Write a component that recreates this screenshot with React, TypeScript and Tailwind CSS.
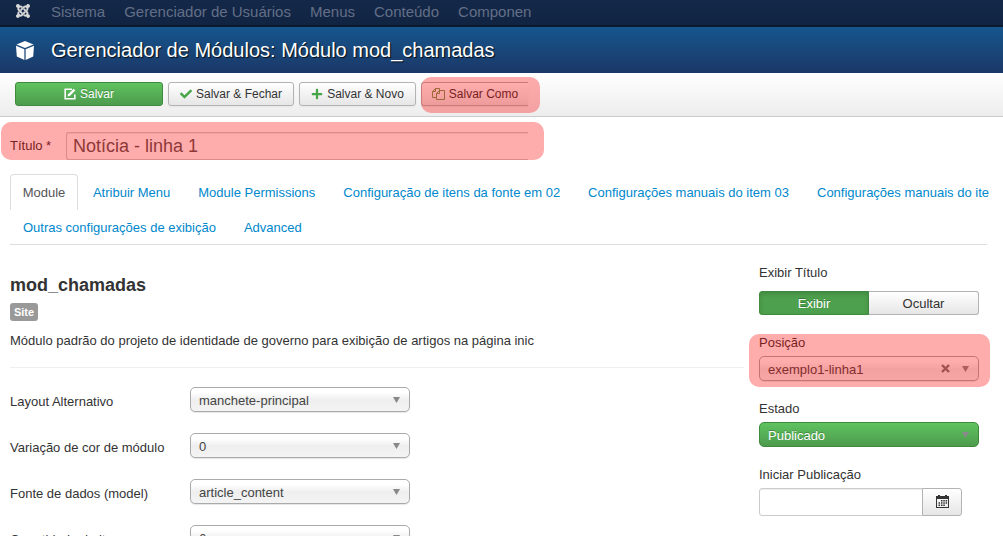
import type { ReactNode } from "react";
import { FaCheck, FaPlus, FaJoomla } from "react-icons/fa";

const btn =
  "flex h-6 items-center justify-center gap-1 rounded-[3px] border border-[#b3b3b3] bg-linear-to-b from-white to-[#e6e6e6] text-xs text-[#333] shadow-[inset_0_1px_0_rgba(255,255,255,0.2),0_1px_2px_rgba(0,0,0,0.05)]";

function EditIcon() {
  return (
    <svg viewBox="0 0 12 12" className="size-3" fill="none" stroke="currentColor">
      <path d="M8 1.2H1.2v9.600h9.600V6.500" strokeWidth="1.600" />
      <path d="M3.600 8.600l.5-2.300L9.600.8l1.700 1.700-5.500 5.500z" fill="currentColor" stroke="none" />
    </svg>
  );
}

function CopyIcon() {
  return (
    <svg viewBox="0 0 13 13" className="size-[13px]" fill="none" stroke="#6f9a55">
      <path d="M4.500 9.500h-4v-6l3-3h4v2" />
      <path d="M3.500 .5v3h-3" />
      <path d="M4.500 5.500l3-3h5v9h-8z" />
      <path d="M7.500 2.500v3h-3" />
    </svg>
  );
}

function CubeIcon() {
  return (
    <svg viewBox="0 0 18 19" className="h-[19px] w-[18px]" fill="#fff">
      <path d="M9 0l8.500 3.400L9 7 .5 3.400z" />
      <path d="M0 4.700l8.400 3.600V19L.8 15.400z" />
      <path d="M18 4.700L9.600 8.300V19l7.600-3.600z" />
    </svg>
  );
}

function CalendarIcon() {
  return (
    <svg viewBox="0 0 13 13" className="size-[13px]" fill="#333">
      <path d="M0 1h2V0h2v1h5V0h2v1h2v12H0zM1 4v8h11V4z" fillRule="evenodd" />
      <path d="M5 5h1.500v1.500H5zM7.300 5h1.500v1.500H7.300zM9.600 5h1.500v1.500H9.600zM2.500 7.300H4v1.500H2.500zM5 7.300h1.500v1.500H5zM7.300 7.300h1.500v1.500H7.300zM9.600 7.300h1.500v1.500H9.600zM2.500 9.600H4v1.500H2.500zM5 9.600h1.500v1.500H5zM7.300 9.600h1.500v1.500H7.300z" />
    </svg>
  );
}

function Caret({ className }: { className: string }) {
  return (
    <svg viewBox="0 0 7 6" className={`pointer-events-none absolute top-2.5 right-2.5 h-1.5 w-[7px] ${className}`} fill="currentColor">
      <path d="M0 0h7L3.500 6z" />
    </svg>
  );
}

function Chosen({ id, value, green = false, children }: { id: string; value: string; green?: boolean; children?: ReactNode }) {
  return (
    <div className="relative h-[25px] w-[220px]">
      <select
        id={id}
        className={`block size-full appearance-none rounded-[5px] border pt-0.5 pl-2 text-[13px] outline-none ${
          green
            ? "border-[#3c8a3c] bg-linear-to-b from-[#5fc35f] to-[#4d9b4d] text-white [text-shadow:0_-1px_0_rgba(0,0,0,0.25)]"
            : "border-[#aaa] bg-linear-to-b from-white from-20% via-[#eee] via-52% to-[#f4f4f4] text-[#444] shadow-[0_1px_1px_rgba(0,0,0,0.1)]"
        }`}
      >
        <option>{value}</option>
      </select>
      {children}
      <Caret className={green ? "text-[#8a8a8a]" : "text-[#888]"} />
    </div>
  );
}

const fields = [
  ["Layout Alternativo", "manchete-principal"],
  ["Variação de cor de módulo", "0"],
  ["Fonte de dados (model)", "article_content"],
  ["Quantidade de itens", "6"],
];

const tabs = [
  "Atribuir Menu",
  "Module Permissions",
  "Configuração de itens da fonte em 02",
  "Configurações manuais do item 03",
];

const highlight = "pointer-events-none absolute rounded-[10px] bg-[#ff0000]/[0.325]";

export default function App() {
  return (
    <div className="h-screen overflow-hidden bg-white font-['Liberation_Sans',Arial,sans-serif] text-[13px] leading-[18px] text-[#333]">
      <nav className="flex h-[27px] items-start border-b-2 border-[#0c1a30] bg-linear-to-b from-[#142849] to-[#112442] pl-[15px]">
        <a href="#" aria-label="Joomla" className="mt-[3px] mr-5 text-[#d9d9d9]">
          <FaJoomla className="size-4" />
        </a>
        <div className="flex gap-[19px] text-[15px] leading-6 whitespace-nowrap text-[#636f86]">
          <a href="#">Sistema</a>
          <a href="#">Gerenciador de Usuários</a>
          <a href="#">Menus</a>
          <a href="#">Conteúdo</a>
          <a href="#">Componen</a>
        </div>
      </nav>

      <header className="flex h-[46px] items-center gap-[17px] bg-linear-to-b from-[#14568e] to-[#1a3867] pl-4">
        <CubeIcon />
        <h1 className="text-xl text-white [text-shadow:1px_1px_1px_rgba(0,0,0,0.8)]">Gerenciador de Módulos: Módulo mod_chamadas</h1>
      </header>

      <div className="flex h-11 items-start gap-[5px] border-b border-[#ccc] bg-linear-to-b from-white to-[#ededed] pt-[9px] pl-[15px]">
        <button className="flex h-6 w-[148px] items-center justify-center gap-1 rounded-[3px] border border-[#3f8a3f] bg-linear-to-b from-[#5fc35f] to-[#4d9b4d] text-xs text-white [text-shadow:0_-1px_0_rgba(0,0,0,0.25)]">
          <EditIcon />
          Salvar
        </button>
        <button className={`${btn} w-[126px]`}>
          <FaCheck className="size-3 text-[#46a546]" />
          Salvar &amp; Fechar
        </button>
        <button className={`${btn} w-[117px]`}>
          <FaPlus className="size-3 text-[#46a546]" />
          Salvar &amp; Novo
        </button>
        <div className="relative">
          <button className={`${btn} w-[107px] rounded-r-none border-r-0`}>
            <CopyIcon />
            Salvar Como
          </button>
          <div className={`${highlight} -top-[5px] left-0 h-9 w-[119px]`} />
        </div>
      </div>

      <div className="relative mt-[15px] flex h-7 items-center pl-2.5">
        <label htmlFor="title" className="w-14">Título *</label>
        <input
          id="title"
          defaultValue="Notícia - linha 1"
          className="h-7 w-[462px] rounded-l-[3px] border border-r-0 border-[#ccc] px-1.5 text-lg text-[#555] shadow-[inset_0_1px_1px_rgba(0,0,0,0.075)] outline-none"
        />
        <div className={`${highlight} -top-2.5 left-px h-[38px] w-[543px]`} />
      </div>

      <div role="tablist" className="mt-3.5 mr-3.5 ml-2.5 text-[#0088cc]">
        <div className="flex whitespace-nowrap">
          <button role="tab" aria-selected="true" className="mr-0.5 h-9 w-[68px] rounded-t border border-b-0 border-[#ddd] text-[#555]">Module</button>
          {tabs.map((t) => (
            <button key={t} role="tab" className="mr-0.5 h-9 px-[13px] pt-0.5">{t}</button>
          ))}
          <button role="tab" className="h-9 pt-0.5 pl-[13px]">Configurações manuais do ite</button>
        </div>
        <div className="mr-0.5 flex border-b border-[#ddd]">
          <button role="tab" className="mr-0.5 h-[34px] px-[13px] pt-0.5">Outras configurações de exibição</button>
          <button role="tab" className="h-[34px] px-[13px] pt-0.5">Advanced</button>
        </div>
      </div>

      <div className="flex justify-between pr-6 pl-2.5">
        <main className="min-w-0 grow pt-[30px]">
          <h2 className="text-lg leading-5 font-bold">mod_chamadas</h2>
          <span className="mt-2 block h-[18px] w-7 rounded-[3px] bg-[#999] text-center text-[11px] font-bold text-white">Site</span>
          <p className="mt-[11px]">Módulo padrão do projeto de identidade de governo para exibição de artigos na página inic</p>
          <hr className="mt-[17px] border-[#eee]" />
          <div className="mt-[19px] flex flex-col gap-[21px]">
            {fields.map(([label, value], i) => (
              <div key={label} className="flex items-start">
                <label htmlFor={`field-${i}`} className="w-[180px] pt-1.5">{label}</label>
                <Chosen id={`field-${i}`} value={value} />
              </div>
            ))}
          </div>
        </main>

        <aside className="ml-[15px] w-[220px] shrink-0 pt-[19px]">
          <p>Exibir Título</p>
          <div className="mt-[9px] flex h-6">
            <button className="w-1/2 rounded-l-[3px] border border-[#3f8a3f] bg-[#4da04d] pt-0.5 text-white shadow-[inset_0_2px_4px_rgba(0,0,0,0.15)] [text-shadow:0_-1px_0_rgba(0,0,0,0.25)]">Exibir</button>
            <button className="w-1/2 rounded-r-[3px] border border-l-0 border-[#b3b3b3] bg-linear-to-b from-white to-[#e6e6e6] pt-0.5">Ocultar</button>
          </div>

          <div className="relative mt-[19px]">
            <label htmlFor="position" className="mb-1 block">Posição</label>
            <Chosen id="position" value="exemplo1-linha1">
              <svg viewBox="0 0 9 9" className="pointer-events-none absolute top-2 right-[29px] size-[9px]" stroke="#777" strokeWidth="2.400">
                <path d="M1 1l7 7M8 1L1 8" />
              </svg>
            </Chosen>
            <div className={`${highlight} top-0 -left-2.5 h-[53px] w-[241px]`} />
          </div>

          <label htmlFor="state" className="mt-[19px] mb-1 block">Estado</label>
          <Chosen id="state" value="Publicado" green />

          <label htmlFor="start" className="mt-[19px] mb-1 block">Iniciar Publicação</label>
          <div className="flex h-7">
            <input id="start" className="w-[164px] rounded-l-[3px] border border-[#ccc] px-1.5 shadow-[inset_0_1px_1px_rgba(0,0,0,0.075)] outline-none" />
            <button aria-label="Calendário" className="-ml-px flex w-10 items-center justify-center rounded-r-[3px] border border-[#b3b3b3] bg-linear-to-b from-white to-[#e6e6e6] pb-px">
              <CalendarIcon />
            </button>
          </div>
        </aside>
      </div>
    </div>
  );
}
